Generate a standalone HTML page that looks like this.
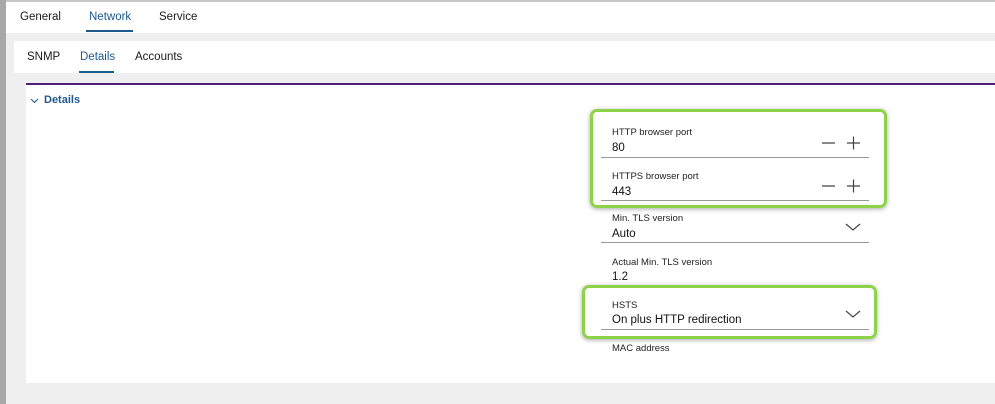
<!DOCTYPE html>
<html><head><style>
body{margin:0;width:995px;height:404px;overflow:hidden;background:#efefef;font-family:"Liberation Sans",sans-serif;position:relative}
.a{position:absolute}
.t{font-size:11.5px;color:#1a1a1a}
.l{font-size:9.5px;color:#222}
.v{font-size:11.5px;color:#111}
.ln{height:1px;background:#9a9a9a;width:268px;left:601px}
.g{border:3px solid #8ed24a;border-radius:7px;box-shadow:0 1px 5px rgba(0,0,0,.35)}
</style></head><body>
<div class="a" style="left:0;top:0;width:6px;height:404px;background:#a8a8a8"></div>
<div class="a" style="left:6px;top:0;right:0;height:33px;background:#fff;border-top:2px solid #c8c8c8;box-sizing:border-box"></div>
<div class="a t" style="left:20px;top:11px">General</div>
<div class="a t" style="left:89px;top:11px;color:#1e5a8c">Network</div>
<div class="a" style="left:86px;top:30px;width:47px;height:2px;background:#1e5a8c"></div>
<div class="a t" style="left:159px;top:11px">Service</div>
<div class="a" style="left:14px;top:41px;right:0;height:32px;background:#fff"></div>
<div class="a t" style="left:27px;top:51px">SNMP</div>
<div class="a t" style="left:80px;top:51px;color:#1e5a8c">Details</div>
<div class="a" style="left:79px;top:71px;width:35px;height:2px;background:#1e5a8c"></div>
<div class="a t" style="left:135px;top:51px">Accounts</div>
<div class="a" style="left:26px;top:83px;right:0;height:300px;background:#fff;border-top:2px solid #4b1f7a;box-sizing:border-box"></div>
<svg class="a" style="left:30px;top:98px" width="9" height="6" viewBox="0 0 9 6" stroke="#1e5a8c" stroke-width="1.1" fill="none"><path d="M1 1L4.5 4.5L8 1"/></svg>
<div class="a" style="left:44px;top:94px;font-size:11px;font-weight:bold;color:#1e5a8c">Details</div>
<div class="a g" style="left:590px;top:109px;width:291px;height:93px"></div>
<div class="a g" style="left:582px;top:285px;width:289px;height:48px"></div>
<div class="a l" style="left:612px;top:127px">HTTP browser port</div>
<div class="a v" style="left:612px;top:142px">80</div>
<div class="a ln" style="top:157px"></div>
<div class="a l" style="left:612px;top:171px">HTTPS browser port</div>
<div class="a v" style="left:612px;top:186px">443</div>
<div class="a ln" style="top:200px"></div>
<svg class="a" style="left:820px;top:135px" width="42" height="60" viewBox="0 0 42 60" stroke="#444" stroke-width="1.2" fill="none">
<path d="M2 8H15M27 8H40M33.5 1.5V14.5M2 51H15M27 51H40M33.5 44.5V57.5"/></svg>
<div class="a l" style="left:612px;top:213px">Min. TLS version</div>
<div class="a v" style="left:612px;top:228px">Auto</div>
<div class="a ln" style="top:242px"></div>
<div class="a l" style="left:612px;top:257px">Actual Min. TLS version</div>
<div class="a v" style="left:612px;top:271px">1.2</div>
<div class="a l" style="left:612px;top:300px">HSTS</div>
<div class="a v" style="left:612px;top:314px">On plus HTTP redirection</div>
<div class="a ln" style="top:329px"></div>
<svg class="a" style="left:845px;top:223px" width="16" height="100" viewBox="0 0 16 100" stroke="#444" stroke-width="1.2" fill="none">
<path d="M1 1L8 7L15 1M1 88L8 94L15 88"/></svg>
<div class="a l" style="left:612px;top:343px">MAC address</div>
</body></html>
